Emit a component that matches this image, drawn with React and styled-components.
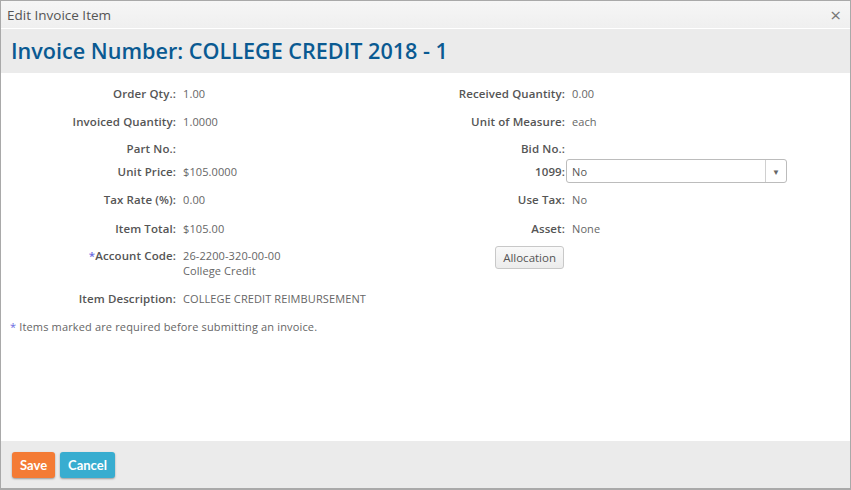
import React from "react";
import styled, { createGlobalStyle } from "styled-components";

const Global = createGlobalStyle`
  html, body { margin: 0; padding: 0; background: #fff; }
  body { font-family: "Open Sans", "Noto Sans", sans-serif; }
  * { box-sizing: border-box; }
`;

const Dialog = styled.div`
  width: 851px;
  height: 490px;
  border: 1px solid #a9a9a9;
  border-bottom-width: 2px;
  display: flex;
  flex-direction: column;
  background: #fff;
`;

const TitleBar = styled.div`
  height: 28px;
  flex: none;
  display: flex;
  align-items: center;
  justify-content: space-between;
  padding: 0 9px 0 6px;
  background: linear-gradient(#f6f6f6, #efefef);
  border-bottom: 1px solid #fff;
  color: #555;
  font-size: 13.5px;
`;

const Close = styled.span`
  font-size: 19px;
  font-weight: 400;
  color: #777;
  line-height: 1;
  margin-top: 1px;
`;

const Header = styled.div`
  height: 44px;
  flex: none;
  background: #ebebeb;
  display: flex;
  align-items: center;
  padding: 0 10px 2px 10px;
`;

const Heading = styled.h1`
  margin: 0;
  font-size: 21.6px;
  font-weight: 600;
  color: #0a5a92;
  letter-spacing: 0;
  white-space: nowrap;
`;

const Body = styled.div`
  flex: 1;
  padding: 13px 10px 0 15px;
`;

const Grid = styled.div`
  display: grid;
  grid-template-columns: 167px 222px 167px 230px;
  grid-template-rows: 28px 27px 23px 28px 29px 27px 43px 28px;
  align-items: start;
  line-height: 15px;
`;

const Label = styled.div`
  text-align: right;
  padding-right: 7px;
  font-size: 11.5px;
  letter-spacing: 0.1px;
  font-weight: 600;
  color: #555;
  white-space: nowrap;
`;

const Value = styled.div`
  font-size: 11px;
  letter-spacing: 0.1px;
  color: #666;
  display: flex;
  flex-direction: column;
  white-space: nowrap;
`;

const Req = styled.span`
  color: #6a6adf;
`;

const Select = styled.div`
  width: 221px;
  height: 24px;
  margin: -5px 0 0 -6px;
  border: 1px solid #bcbcbc;
  border-radius: 3px;
  display: flex;
  align-items: center;
  color: #555;
  background: #fff;
`;

const SelectText = styled.span`
  flex: 1;
  padding-left: 5px;
`;

const Caret = styled.span`
  width: 21px;
  height: 100%;
  border-left: 1px solid #d0d0d0;
  display: flex;
  align-items: center;
  justify-content: center;
  font-size: 8px;
  color: #666;
`;

const BtnCell = styled.div`
  display: flex;
  justify-content: flex-end;
  padding-right: 8px;
  margin-top: -2px;
`;

const SmallButton = styled.button`
  font-family: inherit;
  font-size: 11.5px;
  color: #555;
  height: 23px;
  padding: 0 7px;
  border: 1px solid #c8c8c8;
  border-radius: 3px;
  background: linear-gradient(#f9f9f9, #ececec);
`;

const Note = styled.div`
  margin-left: -6px;
  font-size: 11px;
  line-height: 15px;
  color: #666;
  letter-spacing: 0.15px;
`;

const Footer = styled.div`
  height: 47px;
  flex: none;
  background: #ebebeb;
  display: flex;
  align-items: center;
  gap: 5px;
  padding: 0 11px;
`;

const ActionButton = styled.button`
  font-family: "Lato", "Open Sans", sans-serif;
  font-size: 13px;
  font-weight: 700;
  color: #fff;
  height: 26px;
  padding: 0 ${(p) => p.pad}px;
  border: none;
  border-radius: 3px;
  background: ${(p) => p.bg};
  box-shadow: 0 1px 2px rgba(0,0,0,0.35);
`;

const rows = [
  ["Order Qty.:", "1.00", "Received Quantity:", "0.00"],
  ["Invoiced Quantity:", "1.0000", "Unit of Measure:", "each"],
  ["Part No.:", "", "Bid No.:", ""],
];

export default function App() {
  return (
    <>
      <Global />
      <Dialog>
        <TitleBar>
          <span>Edit Invoice Item</span>
          <Close>×</Close>
        </TitleBar>
        <Header>
          <Heading>Invoice Number: COLLEGE CREDIT 2018 - 1</Heading>
        </Header>
        <Body>
          <Grid>
            {rows.map((r) => (
              <React.Fragment key={r[0]}>
                <Label>{r[0]}</Label>
                <Value>{r[1]}</Value>
                <Label>{r[2]}</Label>
                <Value>{r[3]}</Value>
              </React.Fragment>
            ))}
            <Label>Unit Price:</Label>
            <Value>$105.0000</Value>
            <Label>1099:</Label>
            <Value>
              <Select>
                <SelectText>No</SelectText>
                <Caret>▼</Caret>
              </Select>
            </Value>
            <Label>Tax Rate (%):</Label>
            <Value>0.00</Value>
            <Label>Use Tax:</Label>
            <Value>No</Value>
            <Label>Item Total:</Label>
            <Value>$105.00</Value>
            <Label>Asset:</Label>
            <Value>None</Value>
            <Label>
              <Req>*</Req>Account Code:
            </Label>
            <Value>
              <span>26-2200-320-00-00</span>
              <span>College Credit</span>
            </Value>
            <BtnCell>
              <SmallButton>Allocation</SmallButton>
            </BtnCell>
            <Value />
            <Label>Item Description:</Label>
            <Value>COLLEGE CREDIT REIMBURSEMENT</Value>
            <Label />
            <Value />
          </Grid>
          <Note>
            <Req>*</Req> Items marked are required before submitting an invoice.
          </Note>
        </Body>
        <Footer>
          <ActionButton bg="#f47b35" pad={8}>Save</ActionButton>
          <ActionButton bg="#38add0" pad={8}>Cancel</ActionButton>
        </Footer>
      </Dialog>
    </>
  );
}
